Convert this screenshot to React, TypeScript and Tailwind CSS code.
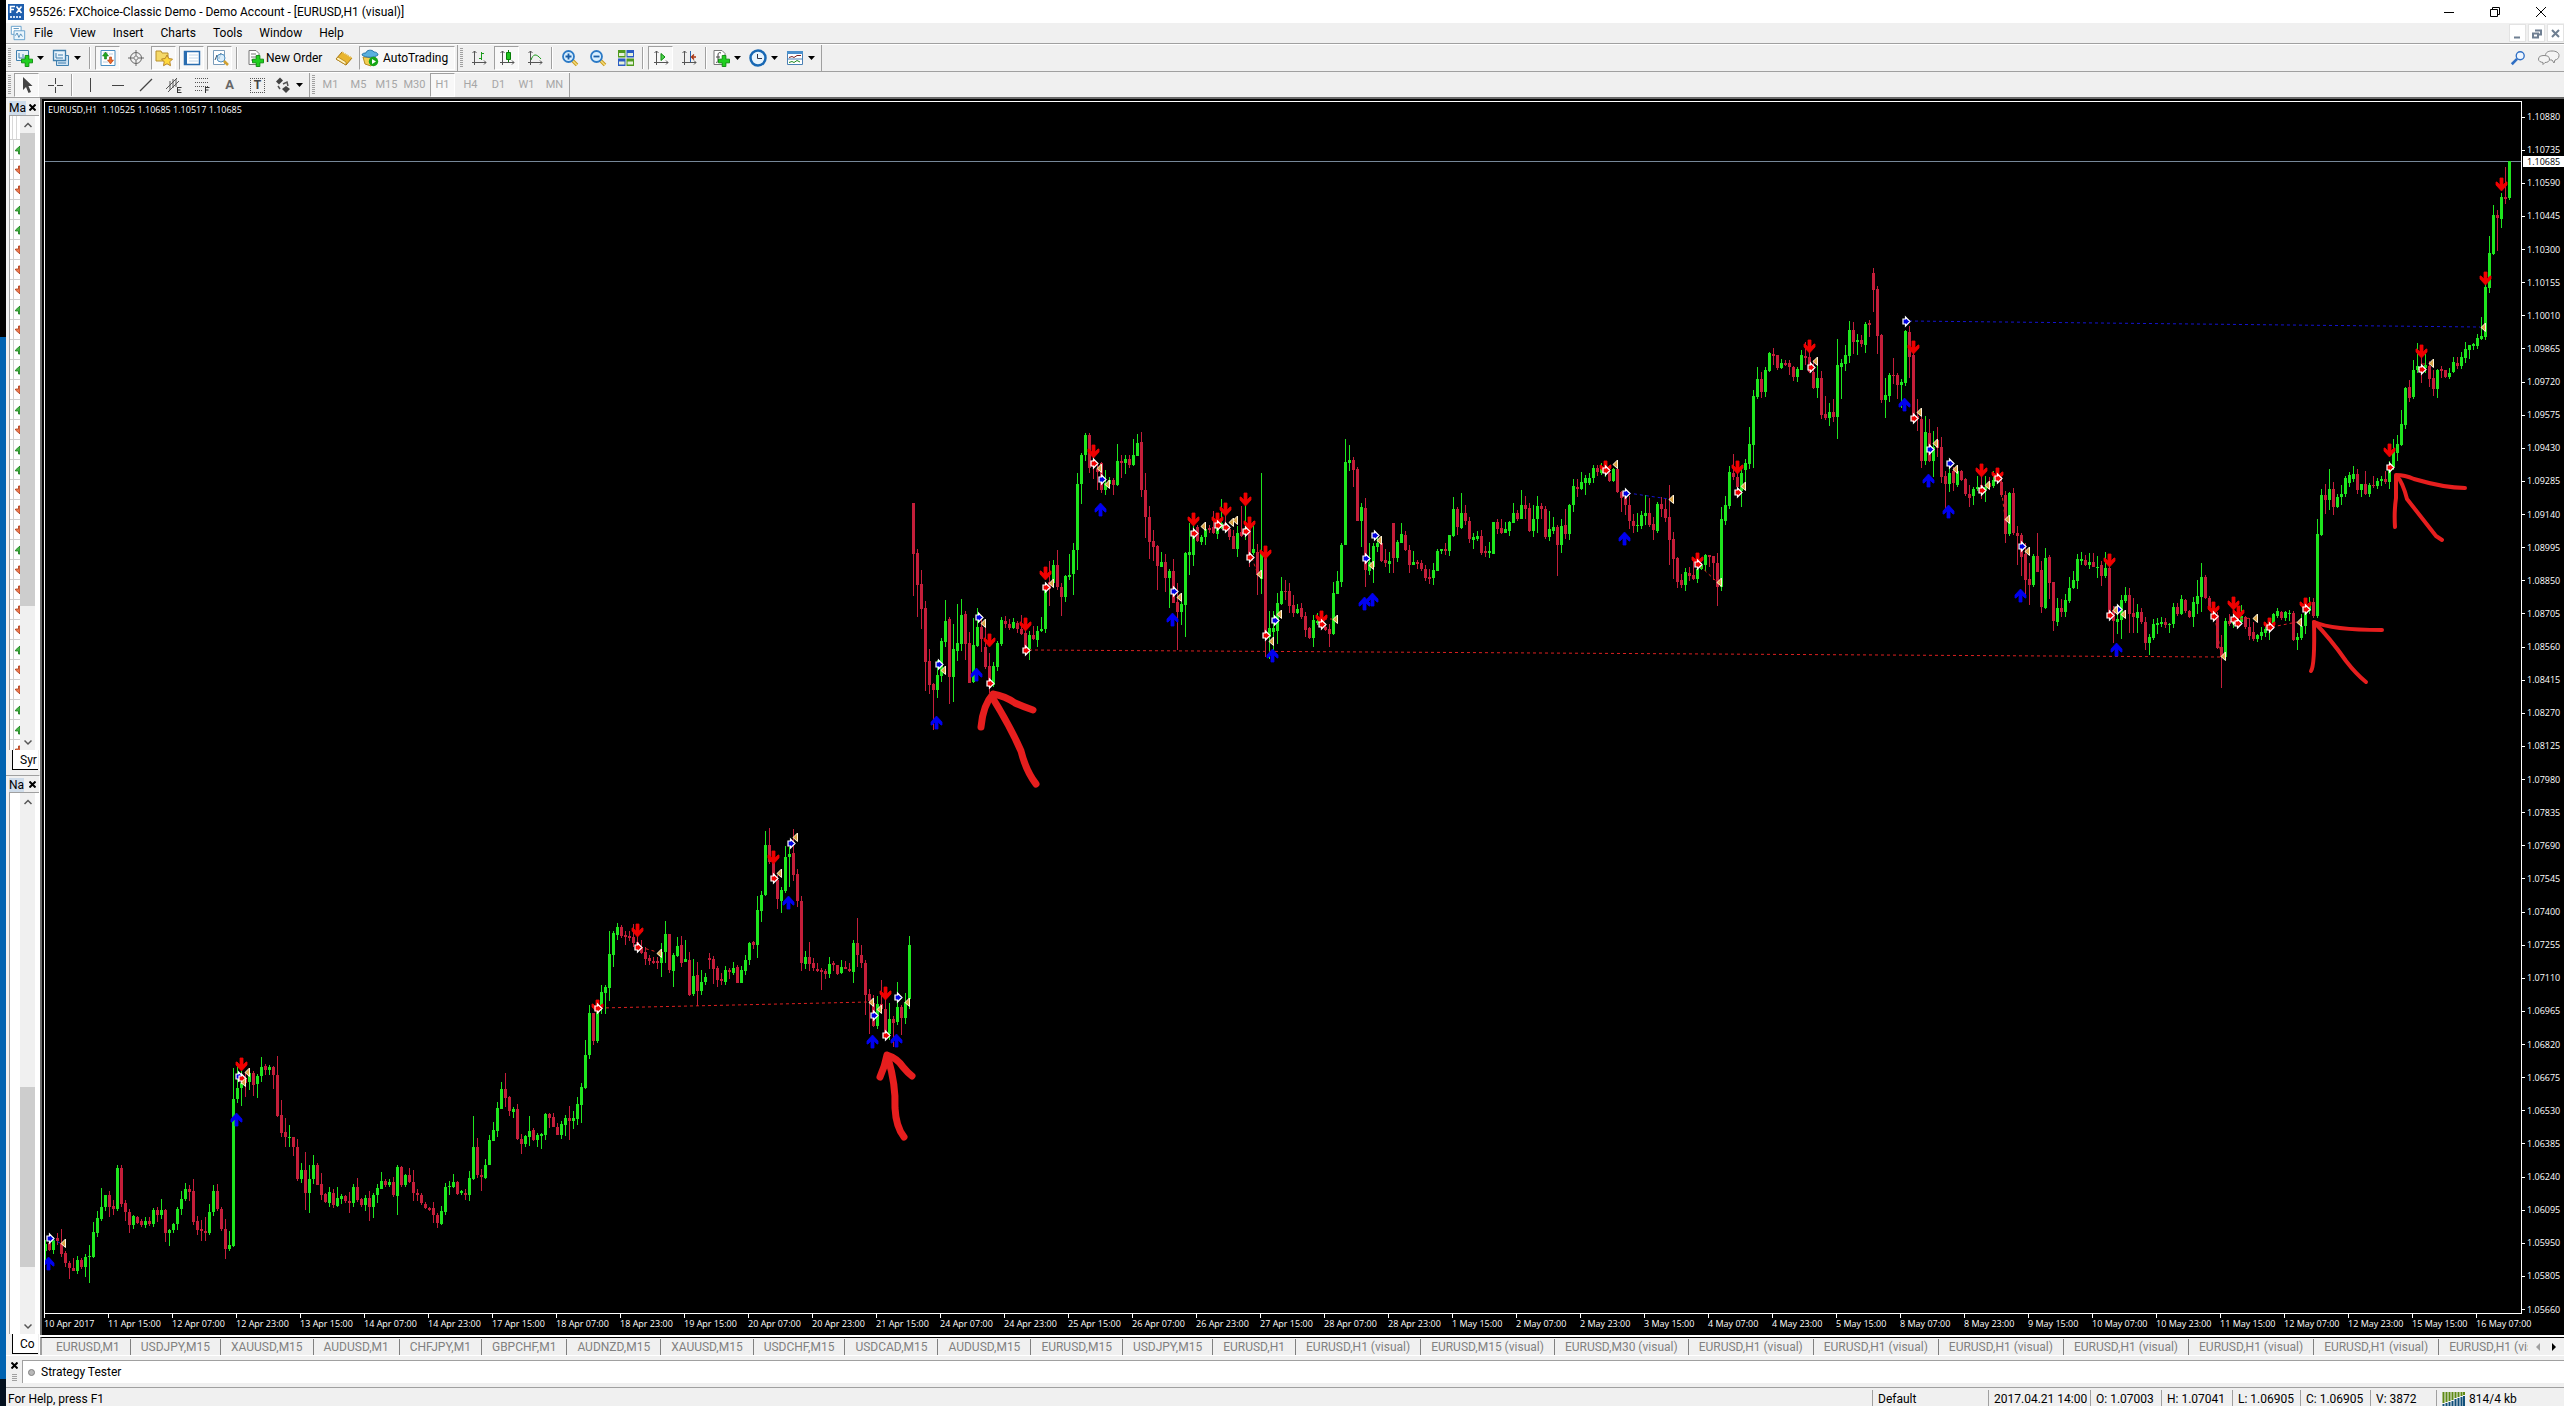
import type { ReactNode } from "react"
import clsx from "clsx"

type Segment = { first: number; base: number; unit: number; bars: string }

// Each bar: direction, then high, body top, body bottom, low measured down from the segment base
const segments: Segment[] = [
  {
    first: 0,
    base: 900,
    unit: 3,
    bars: `g1020,1032,1052,1090 r1022,1030,1050,1052 g1012,1020,1050,1062 r998,1015,1022,1035 r986,1030,1062,1072 r1052,1060,1090,1102
r1082,1088,1104,1136 r1075,1104,1112,1114 g1068,1080,1112,1122 r1075,1080,1100,1106 g1062,1070,1100,1130 g1035,1068,1072,1150
g966,996,1072,1074 g934,954,998,1012 g864,922,958,964 g884,885,922,934 r874,885,920,950 r900,918,926,944 g795,803,926,932
r795,803,912,920 r900,910,936,962 r926,936,976,1000 g944,948,976,986 r948,950,968,972 r956,964,974,980 g950,962,976,984
r950,963,972,978 g924,930,972,980 r920,930,946,966 g898,930,946,956 r928,930,1000,1026 g986,990,1000,1038 g968,972,990,998
g920,926,972,990 g874,898,928,946 g850,866,898,904 r856,866,876,904 r836,874,966,974 r948,964,990,1004 r960,988,994,1022
r950,992,1000,1022 g912,936,1000,1004 g855,874,936,948 r852,874,926,932 r922,926,988,992 r958,988,1048,1078 g992,1034,1048,1054
g505,598,1038,1040 g486,564,598,608 g512,550,564,618 r520,535,550,590 g512,519,546,570 r514,519,554,588 g522,528,552,594
g472,501,528,545 r492,499,510,526 g495,500,510,526 r498,502,526,566 r468,524,648,652 r600,645,700,712 r654,696,712,740
g674,710,714,740 r710,712,742,768 r718,742,836,844 g788,810,836,848 r756,810,878,930 g796,836,878,940 g766,796,836,852
r790,796,854,856 r818,852,884,900 r878,882,905,908 g862,876,910,922 r868,878,916,924 g862,894,918,922 g882,887,897,912
r886,888,902,908 r876,902,908,938 g852,862,908,920 r834,862,900,906 r894,898,914,922 g884,894,914,932 r874,894,920,964
g880,884,920,954 g852,864,884,908 g816,844,866,868 r838,844,854,862 g836,846,854,860 r830,846,886,892 g796,800,888,944
r798,802,856,862 g822,826,856,860 r804,826,846,850 r810,846,880,902 r868,880,884,904 r880,884,910,914 r906,912,924,928
r920,924,930,934 r905,924,944,968 r938,944,970,984 g918,934,972,974 g850,862,936,944 g844,858,862,886 g822,846,862,864
r844,846,882,886 g870,874,880,886 r868,880,884,900 g814,834,884,902 g648,742,836,840 r714,742,826,834 r806,826,832,874
g778,794,834,836 g704,720,794,796 g666,690,722,724 g606,624,692,710 g546,568,626,628 r518,568,594,622 r588,590,632,648
g620,628,636,654 r612,628,716,720 r702,716,732,762 g704,708,732,740 g648,692,712,738 r684,690,720,724 g698,706,720,740
g700,702,708,746 g640,642,706,720 r638,642,654,684 r640,652,680,682 r668,680,704,706`,
  },
  {
    first: 129,
    base: 800,
    unit: 3,
    bars: `g962,972,1005,1018 g945,954,974,1008 r918,955,964,1020 g932,954,962,988 g892,912,958,974 g848,860,914,970 g720,765,864,866
g615,640,766,776 r638,640,722,735 g625,628,722,730 g556,576,628,642 g556,562,578,642 g393,462,564,602 g393,398,466,500
g370,380,404,420 r374,380,408,415 r392,404,412,434 r392,408,414,422 r372,410,428,440 r400,426,436,444 r420,440,458,462
r442,456,478,494 r464,474,484,494 r472,482,488,492 r472,482,490,506 g430,456,490,530 g363,402,456,488 r402,402,510,518
g460,465,514,560 g412,438,468,472 r408,436,488,500 g420,478,486,486 r456,480,584,588 g476,528,582,588 r486,526,572,618
g510,545,572,586 g518,530,546,556 r460,474,480,506 r468,476,506,552 r498,504,540,560 r520,538,544,554 g498,510,546,556
r504,510,516,536 g486,504,520,526 r494,502,548,550 g498,510,548,550 g466,480,512,524 g426,428,480,494 r422,426,434,446
g288,330,436,474 g274,286,332,366 g94,136,286,288 r84,136,186,192 r178,188,230,240 r226,240,296,328 g260,270,302,338
g138,172,272,280 g140,162,172,260 r86,160,226,242 r206,222,304,322 r288,304,490,512 g454,472,492,506 r426,472,492,512
r474,490,504,512 r488,508,514,516 r504,510,516,570 r508,514,522,536 g472,492,522,534 r484,490,496,512 r494,496,522,526
g480,502,518,522 r484,500,506,508 r490,506,514,516 g420,430,516,548 r354,430,466,500 r436,466,490,504 r480,488,584,644
r568,582,602,702 r584,610,678,680 g588,612,678,688 r540,612,628,632 r570,628,700,702 g608,658,702,720 r648,658,668,742
g546,620,666,674 r616,620,654,706 g578,606,654,672 g408,436,598,626`,
  },
  {
    first: 217,
    base: 400,
    unit: 3,
    bars: `r309,310,462,588 r446,460,556,650 r510,552,628,686 r603,625,785,874 r748,784,854,882 r848,852,870,990 g780,826,870,894
g714,724,828,846 g600,664,726,740 r652,658,830,912 g672,748,830,906 g612,730,752,782 g596,645,732,752 r634,642,732,780
r696,730,848,850 g654,736,846,848 g624,682,738,740 r652,680,716,756 r668,740,800,808 r760,798,860,878 g786,798,856,860
g722,730,800,814 g650,660,732,738 r648,662,672,684 r656,672,684,690 g654,666,684,688 r664,668,686,698 r644,686,702,706
r686,698,746,750 g692,706,748,780 r678,704,718,720 g678,692,720,740 g650,688,694,696 g562,570,688,700 r484,545,566,618
g480,494,548,556 r450,494,560,570 r548,560,590,648 g524,528,592,606 g462,524,530,540 g430,450,522,584 g220,252,450,510
g158,164,252,312 g98,104,166,184 r98,104,204,218 r170,180,202,236 r190,206,216,270 r186,188,270,278 g210,250,270,285
g232,240,252,262 r234,240,256,284 g132,184,254,258 r166,182,188,234 g166,176,190,222 r166,178,194,204 g118,166,196,198
g102,128,168,168 r96,126,270,292 r220,270,352,414 r318,350,426,478 r390,424,440,484 r436,438,498,570 g456,486,500,502
r462,486,534,576 g506,514,534,624 r476,512,608,608 r550,606,636,750 g606,612,636,674 g456,460,614,712 g368,456,464,524
g376,398,464,498 r376,380,424,426 g404,410,426,434 g382,386,412,434 r376,384,390,398 r334,380,400,402 g350,380,402,416
g298,370,384,386 r334,368,376,384 r380,386,410,420 r390,408,446,448 g378,398,446,472 r318,396,408,410 g312,384,406,420
r380,386,480,500 g364,448,460,466 r432,456,524,584 g220,460,536,582 r472,474,704,770 g632,684,712,776 g634,684,696,750
g580,610,694,732 g530,572,612,616 r540,572,574,600 r550,572,618,640 r586,616,638,650 g612,626,638,642 r610,624,650,656
r636,648,690,712 r680,684,714,716 g644,660,714,740 g640,664,670,676 r646,650,676,682 r672,680,690,692 r672,688,702,740
g545,580,702,704 g514,544,582,582 g430,434,546,560 g118,186,436,436 g134,180,188,212 r170,180,210,262 r202,206,362,364
g308,322,362,440 r294,324,510,560 g430,486,512,524 g430,438,500,548 g412,430,440,456 r420,430,482,486 r448,480,490,500
g456,484,492,520 r368,370,474,518 g420,426,474,486 g368,402,428,430 r392,404,450,454 r436,450,494,518 g454,486,494,496
r480,486,492,506 r480,488,508,512 r496,506,534,542 r506,532,538,552 g490,510,534,554 g448,454,512,514 g446,448,454,462
r430,448,454,466 g404,406,452,468 g292,326,408,410 r320,326,382,404 g280,338,384,386 r316,338,362,376 r350,362,416,428
g400,410,420,446 g392,408,416,424`,
  },
  {
    first: 359,
    base: 250,
    unit: 3,
    bars: `r840,858,908,914 r888,904,910,920 g876,904,908,924 g816,816,912,912 r808,816,838,852 r806,834,848,852 g816,838,850,850
g812,816,842,858 g760,788,818,820 r780,788,808,812 g720,766,806,808 r738,766,776,806 r758,774,842,846 g766,806,842,862
g738,768,806,850 r760,768,778,808 r768,776,860,866 g782,838,860,874 g802,832,842,852 r824,832,884,978 g808,828,884,910
r778,826,852,866 g762,766,852,870 g688,708,766,786 r688,710,718,742 g666,696,718,720 g674,684,698,734 g670,684,700,704
g646,654,684,698 r644,654,666,678 g640,658,668,676 g650,658,670,680 r660,668,694,696 g654,658,694,696 r650,656,726,728
r722,726,744,786 r730,742,766,796 r738,764,814,838 r792,812,828,850 g788,824,828,846 g782,796,828,836 g736,788,798,824
r744,790,824,830 r802,822,840,870 g756,762,844,848 r740,762,778,802 r744,776,804,816 r706,800,870,944 r846,866,926,988
r922,924,996,1014 r972,990,1006,1014 g954,966,1006,1022 r950,968,978,992 r932,976,988,990 g940,956,988,998 g940,944,956,960
g912,916,946,962 r914,916,922,950 r918,918,938,990 r908,938,1012,1068 g770,808,1012,1022 g738,766,814,824 g648,666,768,776
r612,668,682,690 r650,680,710,712 g650,668,722,770 g628,640,660,720 g530,582,642,656 g420,438,584,654 g350,386,440,446
r366,388,426,444 g350,360,426,440 g306,308,362,366 r294,312,318,346 r314,316,354,360 g328,338,354,358 r330,338,344,348
r330,338,350,376 r348,350,380,392 g350,358,380,396 g300,314,360,360 r276,318,324,346 r300,320,366,370 r330,366,414,416
g338,384,414,444 r364,384,494,506 r438,492,504,510 g460,486,504,528 r448,486,500,516 g266,346,500,566 g326,338,352,446
g286,314,342,364 g212,240,318,340 r216,240,276,312 g252,270,276,316 r256,270,282,292 g216,222,284,310 r210,220,226,262
r54,68,120,186 r108,118,258,312 r252,256,450,460 g384,436,450,504 g368,374,438,456 r324,374,378,402 r370,376,404,446
g388,396,404,474 g240,242,398,408 r228,246,320,384 r306,314,516,520 r446,498,508,542 r500,506,632,654 g498,546,632,644
r506,548,632,636 g542,592,632,682 r530,570,594,620 r560,592,680,698 r662,678,702,776 g642,670,702,726 r650,664,700,724
g658,664,704,710 r660,664,690,694 r684,686,732,738 r704,732,744,770 g710,716,738,766 g678,710,718,722 r674,706,716,746
g678,710,720,756 r680,698,710,716 g664,690,708,714 r672,680,692,702 r682,696,736,740 r724,734,852,878 g726,730,852,858
r714,730,850,854 r828,850,858,946 r850,856,920,978 r880,912,990,1040 r940,988,1006,1064 g912,918,1006,1012 r848,918,966,966
r932,960,1070,1090 g894,924,1074,1078 r914,920,998,1048 r996,996,1112,1144 g1044,1074,1116,1128 r1046,1074,1086,1100
g1032,1050,1086,1100 g982,1014,1052,1058 g962,990,1014,1016 g912,928,994,1016 g906,926,934,944 r916,930,944,948
g908,936,944,958 r910,936,950,952 g918,950,954,984`,
  },
  {
    first: 514,
    base: 120,
    unit: 2.613,
    bars: `r1152,1164,1192,1218 g1130,1170,1192,1196 r1160,1170,1288,1300 r1270,1280,1310,1366 g1286,1304,1312,1342 g1242,1254,1306,1356
g1220,1240,1256,1262 r1222,1240,1290,1340 r1250,1288,1298,1340 g1264,1286,1300,1340 r1276,1286,1312,1316 r1298,1312,1366,1386
g1342,1350,1366,1398 g1304,1318,1354,1358 g1300,1314,1320,1342 g1298,1312,1318,1324 r1300,1312,1320,1328 g1314,1316,1320,1340
g1262,1272,1318,1328 r1262,1272,1292,1296 g1240,1252,1292,1294 r1252,1254,1284,1288 r1280,1284,1298,1300 g1246,1260,1298,1326
g1202,1244,1264,1290 g1158,1194,1246,1286 r1188,1194,1248,1252 r1244,1248,1280,1284 r1270,1280,1296,1300 r1286,1294,1380,1382
r1345,1376,1402,1484 g1300,1308,1404,1406 r1290,1308,1318,1322 g1280,1300,1318,1328 r1290,1300,1312,1318 g1268,1296,1312,1314
r1296,1298,1326,1330 r1300,1324,1348,1360 r1312,1338,1356,1362 g1342,1346,1356,1364 g1324,1338,1348,1360 g1320,1330,1340,1350
g1310,1316,1332,1358 g1288,1292,1314,1320 g1274,1284,1296,1300 r1282,1286,1302,1306 g1284,1286,1302,1308 g1280,1288,1292,1310
r1284,1288,1358,1362 g1340,1352,1358,1386 g1290,1322,1354,1358 g1280,1288,1322,1342 g1246,1262,1284,1290 r1248,1260,1296,1300
g1042,1082,1296,1300 g964,980,1084,1086 r952,980,992,1030 g912,964,992,1018 r946,964,1010,1032 g978,984,1010,1014
g954,976,984,1006 g930,936,976,984 g920,928,948,960 g904,926,938,946 r912,926,966,978 g950,952,966,984 r918,952,976,980
g948,954,976,986 r930,954,956,962 g936,942,956,964 g930,938,944,956 r918,938,946,950 g890,908,946,964 g834,866,906,914
g822,846,870,892 g758,794,850,852 g698,700,796,808 r680,698,726,736 g626,652,724,728 g584,644,654,662 r610,644,660,686
g612,640,648,662 r630,642,676,698 r652,674,704,722 g650,652,704,726 r642,650,656,674 r652,654,672,674 g648,660,672,676
g618,632,658,662 r620,634,642,650 g606,618,644,650 g580,598,622,636 g588,588,602,624 g584,586,590,602 g558,570,590,598
g516,564,572,574 g420,436,566,574 g302,348,438,452 g222,248,350,354 r236,248,256,342 g190,200,258,282 r124,200,206,220
g108,108,204,208`,
  },
]

const candles = segments.flatMap(({ first, base, unit, bars }) =>
  bars.split(/\s+/).map((bar, i) => {
    const [high, top, bottom, low] = bar
      .slice(1)
      .split(",")
      .map((v) => Math.round(base + Number(v) / unit))
    return { x: 45 + 4 * (first + i), up: bar[0] === "g", high, top, bottom, low }
  }),
)

type Point = [number, number]

const sellSignals: Point[] = [
  [241, 1058], [597, 1000], [637, 924], [773, 851], [885, 987], [989, 634], [1025, 618], [1045, 567], [1093, 445],
  [1193, 513], [1217, 513], [1225, 503], [1245, 493], [1249, 517], [1265, 546], [1321, 611], [1605, 461], [1697, 553],
  [1737, 461], [1809, 340], [1913, 341], [1981, 464], [1997, 468], [2109, 554], [2213, 602], [2233, 597], [2238, 606],
  [2269, 618], [2305, 598], [2389, 444], [2421, 345], [2485, 272], [2501, 178],
]

const buySignals: Point[] = [
  [48, 1257], [236, 1113], [788, 896], [872, 1035], [896, 1034], [936, 716], [976, 668], [1100, 503], [1172, 613],
  [1272, 649], [1364, 597], [1372, 593], [1624, 532], [1904, 398], [1928, 474], [1948, 505], [2020, 589], [2116, 643],
]

const buyEntries: Point[] = [
  [50, 1238], [239, 1076], [791, 843], [874, 1015], [898, 997], [939, 664], [979, 617], [1102, 479], [1174, 591],
  [1275, 620], [1366, 558], [1375, 535], [1626, 493], [1906, 321], [1930, 449], [1950, 463], [2022, 546], [2118, 609],
]

const sellEntries: Point[] = [
  [242, 1078], [598, 1008], [638, 947], [774, 878], [886, 1035], [990, 683], [1026, 650], [1046, 587], [1094, 463],
  [1194, 533], [1218, 525], [1226, 527], [1246, 531], [1250, 557], [1266, 635], [1322, 624], [1606, 470], [1698, 564],
  [1738, 492], [1811, 367], [1914, 418], [1982, 490], [1998, 478], [2110, 615], [2214, 616], [2234, 619], [2238, 623],
  [2270, 627], [2306, 609], [2390, 467], [2422, 369],
]

const exits: Point[] = [
  [63, 1243], [247, 1072], [243, 1082], [659, 953], [779, 873], [795, 837], [871, 1002], [879, 1009], [907, 1002],
  [943, 670], [983, 623], [1051, 583], [1099, 468], [1107, 484], [1179, 597], [1203, 526], [1231, 522], [1235, 520],
  [1259, 574], [1271, 641], [1279, 614], [1335, 619], [1371, 565], [1379, 540], [1615, 464], [1671, 499], [1719, 582],
  [1743, 486], [1815, 361], [1919, 412], [1935, 443], [1955, 469], [1987, 485], [2007, 519], [2027, 551], [2115, 610],
  [2123, 614], [2223, 656], [2255, 618], [2299, 622], [2431, 363], [2483, 327],
]

const sellTrades = [
  "M600 1008L869 1002", "M1029 650L2221 657", "M640 947L657 952", "M2272 627L2297 622", "M2240 619L2252 618",
  "M1700 566L1716 581", "M2000 480L2005 517", "M2215 617L2221 655", "M1324 619L1332 619", "M2422 364L2428 364",
  "M1252 558L1257 572",
]

const buyTrades = ["M1909 321L2480 327", "M1628 493L1669 499", "M52 1239L60 1243"]

const prices = Array.from({ length: 37 }, (_, i) => (1.1088 - i * 0.00145).toFixed(5))

const times = [
  "10 Apr 2017", "11 Apr 15:00", "12 Apr 07:00", "12 Apr 23:00", "13 Apr 15:00", "14 Apr 07:00", "14 Apr 23:00",
  "17 Apr 15:00", "18 Apr 07:00", "18 Apr 23:00", "19 Apr 15:00", "20 Apr 07:00", "20 Apr 23:00", "21 Apr 15:00",
  "24 Apr 07:00", "24 Apr 23:00", "25 Apr 15:00", "26 Apr 07:00", "26 Apr 23:00", "27 Apr 15:00", "28 Apr 07:00",
  "28 Apr 23:00", "1 May 15:00", "2 May 07:00", "2 May 23:00", "3 May 15:00", "4 May 07:00", "4 May 23:00",
  "5 May 15:00", "8 May 07:00", "8 May 23:00", "9 May 15:00", "10 May 07:00", "10 May 23:00", "11 May 15:00",
  "12 May 07:00", "12 May 23:00", "15 May 15:00", "16 May 07:00",
]

const chartTabs = [
  "EURUSD,M1", "USDJPY,M15", "XAUUSD,M15", "AUDUSD,M1", "CHFJPY,M1", "GBPCHF,M1", "AUDNZD,M15", "XAUUSD,M15",
  "USDCHF,M15", "USDCAD,M15", "AUDUSD,M15", "EURUSD,M15", "USDJPY,M15", "EURUSD,H1", "EURUSD,H1 (visual)",
  "EURUSD,M15 (visual)", "EURUSD,M30 (visual)", "EURUSD,H1 (visual)", "EURUSD,H1 (visual)", "EURUSD,H1 (visual)",
  "EURUSD,H1 (visual)", "EURUSD,H1 (visual)", "EURUSD,H1 (visual)", "EURUSD,H1 (visual)",
]

const timeframes = ["M1", "M5", "M15", "M30", "H1", "H4", "D1", "W1", "MN"]
const menus = ["File", "View", "Insert", "Charts", "Tools", "Window", "Help"]
const ticks = "GRRGGRRRGRGGRGRGGRRRGRRRRGRRGGR".split("")

function Icon({ size = "size-[18px]", children }: { size?: string; children: ReactNode }) {
  return (
    <svg viewBox="0 0 18 18" className={clsx("shrink-0", size)} fill="none" aria-hidden="true">
      {children}
    </svg>
  )
}

const Plus = () => (
  <path d="M10 6.500h4v4h4v4h-4v4h-4v-4h-4v-4h4z" fill="#1fd01f" stroke="#0b8a0b" strokeWidth="1" transform="translate(1 0.500) scale(.92)" />
)

const Magnifier = ({ minus }: { minus?: boolean }) => (
  <Icon>
    <path d="M11 11l5 5" stroke="#c89a1e" strokeWidth="3.500" />
    <path d="M11 11l5 5" stroke="#f5dd7a" strokeWidth="1.500" />
    <circle cx="7.500" cy="7.500" r="5.500" fill="#d8efff" stroke="#2c7ac6" strokeWidth="1.800" />
    <path d={minus ? "M4.500 7.500h6" : "M4.500 7.500h6M7.500 4.500v6"} stroke="#1b5ea6" strokeWidth="1.800" />
  </Icon>
)

const Axes = ({ children }: { children: ReactNode }) => (
  <Icon>
    <path d="M4.500 2v14M2 13.500h14M2.500 4l2-2 2 2M14 11.500l2 2-2 2" stroke="#555" />
    {children}
  </Icon>
)

function Caret() {
  return (
    <svg viewBox="0 0 7 4" className="h-1 w-[7px] shrink-0" aria-hidden="true">
      <path d="M0 0h7L3.500 4z" fill="#000" />
    </svg>
  )
}

function Tool({ label, pressed, menu, children }: { label: string; pressed?: boolean; menu?: boolean; children: ReactNode }) {
  return (
    <button
      type="button"
      aria-label={label}
      aria-pressed={pressed}
      className={clsx(
        "flex h-6 shrink-0 items-center border",
        menu ? "w-[34px] gap-1" : "w-[25px] justify-center",
        pressed ? "border-t-[#a0a0a0] border-l-[#a0a0a0] border-r-white border-b-white bg-[#f8f8f8]" : "border-transparent",
      )}
    >
      {children}
      {menu && <Caret />}
    </button>
  )
}

const Divider = () => <span className="mx-px h-[22px] w-[2px] shrink-0 border-l border-[#a0a0a0] bg-white" />

const Grip = () => <span className="h-5 w-[3px] shrink-0 bg-[repeating-linear-gradient(#a0a0a0_0_1px,#f0f0f0_1px_2px)]" />

function Band({ children }: { children: ReactNode }) {
  return <div className="flex items-center gap-[3px] border-r border-[#a0a0a0] px-[2px]">{children}</div>
}

function Toolbars() {
  return (
    <div className="bg-[#f0f0f0]">
      <div className="flex h-7 border-t border-[#a0a0a0]">
        <div className="flex border-t border-white">
          <Band>
            <Grip />
            <Tool label="New chart" menu>
              <Icon>
                <path d="M1.500 1.500h12v10h-12z" fill="#e8f3fb" stroke="#3f7fae" />
                <path d="M4 4v5h7M8 5v3" stroke="#3f7fae" />
                <Plus />
              </Icon>
            </Tool>
            <Tool label="Profiles" menu>
              <Icon>
                <path d="M4.500 6.500h12v10h-12z" fill="#cfe3f3" stroke="#3f7fae" />
                <path d="M1.500 1.500h12v10h-12z" fill="#e8f3fb" stroke="#3f7fae" strokeWidth="1.300" />
                <path d="M4 4v5h7M6 14h8M6 6h5" stroke="#3f7fae" />
              </Icon>
            </Tool>
            <Divider />
            <Tool label="Market Watch" pressed>
              <Icon>
                <path d="M2 1.500h14v15H2z" fill="#fff" stroke="#4a90c4" />
                <path d="M4 4h5M4 13h5M10 5h4M10 12h4" stroke="#bcd" />
                <path d="M3.500 7l3-4 3 4h-2v3h-2V7z" fill="#22a822" stroke="#137a13" strokeWidth=".600" />
                <path d="M8.500 11l3 4 3-4h-2V8h-2v3z" fill="#f26a2a" stroke="#a83a10" strokeWidth=".600" />
              </Icon>
            </Tool>
            <Tool label="Data Window">
              <Icon>
                <circle cx="9" cy="9" r="5.500" stroke="#666" />
                <path d="M9 1v6M9 11v6M1 9h6M11 9h6" stroke="#666" />
                <circle cx="9" cy="9" r="2" stroke="#888" />
              </Icon>
            </Tool>
            <Tool label="Navigator" pressed>
              <Icon>
                <path d="M1 2h5l1 2h6v8H1z" fill="#f5d968" stroke="#b8902a" />
                <path d="M12 6l1.800 3.600 3.700.5-2.700 2.700.7 3.900-3.500-1.900-3.500 1.900.7-3.900L6.500 10l3.700-.5z" fill="#ffd83d" stroke="#b8862a" />
              </Icon>
            </Tool>
            <Tool label="Terminal" pressed>
              <Icon>
                <path d="M1.500 2.500h15v13h-15z" fill="#fff" stroke="#2a6db0" strokeWidth="1.500" />
                <path d="M3 3v12" stroke="#2a6db0" strokeWidth="2" />
                <path d="M6 6h9M6 9h9M6 12h9" stroke="#c4d8ea" />
              </Icon>
            </Tool>
            <Tool label="Strategy Tester" pressed>
              <Icon>
                <path d="M2.500 1.500h11v14h-11z" fill="#fff" stroke="#7a9cba" />
                <path d="M4 11l2-5 2 4 2-6" stroke="#456" />
                <circle cx="10" cy="9" r="4" fill="#cfe8fa" fillOpacity=".8" stroke="#4f8fc0" />
                <path d="M13 12l4 4" stroke="#d0a030" strokeWidth="2.500" />
              </Icon>
            </Tool>
            <Divider />
            <button type="button" className="flex h-6 w-[86px] shrink-0 items-center gap-[2px] pl-1 whitespace-nowrap">
              <Icon>
                <path d="M3 1.500h7l3 3v11H3z" fill="#fff" stroke="#777" />
                <path d="M5 5h5M5 8h6M5 11h4" stroke="#777" />
                <Plus />
              </Icon>
              New Order
            </button>
            <Tool label="MetaEditor">
              <Icon>
                <path d="M1 10l6-7 10 6-6 7z" fill="#e9b52f" stroke="#a8760f" />
                <path d="M1 10l10 6v-3L3 8z" fill="#fff1b8" stroke="#a8760f" strokeWidth=".700" />
                <path d="M7 3l10 6" stroke="#fbe08a" />
              </Icon>
            </Tool>
            <button
              type="button"
              aria-pressed="true"
              className="flex h-6 w-24 shrink-0 items-center gap-1 border border-t-[#a0a0a0] border-r-white border-b-white border-l-[#a0a0a0] bg-[#f8f8f8] pl-px whitespace-nowrap"
            >
              <Icon>
                <path d="M2 8l2 7 6 2 5-8z" fill="#f2cf52" stroke="#b48a22" />
                <path d="M1 6c0-2 3-2 4-2 0-3 6-4 8-1 2 0 4 1 4 3-4 3-12 3-16 0z" fill="#5ab0de" stroke="#2a78aa" />
                <circle cx="12.500" cy="12.500" r="4.700" fill="#16a616" />
                <path d="M11 10l4 2.500-4 2.500z" fill="#fff" />
              </Icon>
              AutoTrading
            </button>
          </Band>
          <Band>
            <Grip />
            <Tool label="Bar chart">
              <Axes>
                <path d="M11.500 3v8M9 9.500h2M12 4.500h2" stroke="#1a9a1a" />
              </Axes>
            </Tool>
            <Tool label="Candlesticks" pressed>
              <Axes>
                <path d="M10.500 1v12" stroke="#067d06" />
                <path d="M8.500 3.500h4v7h-4z" fill="#1fc41f" stroke="#067d06" />
              </Axes>
            </Tool>
            <Tool label="Line chart">
              <Axes>
                <path d="M5 11c2-6 5-7 10-1" stroke="#1a9a1a" />
              </Axes>
            </Tool>
            <Divider />
            <Tool label="Zoom in">
              <Magnifier />
            </Tool>
            <Tool label="Zoom out">
              <Magnifier minus />
            </Tool>
            <Tool label="Tile windows">
              <Icon>
                <path d="M1 1h7.500v7.500H1zM9.500 9.500H17V17H9.500z" fill="#4f9a1f" />
                <path d="M9.500 1H17v7.500H9.500zM1 9.500h7.500V17H1z" fill="#2a5cc4" />
                <path d="M2 4h5.500v3H2zM10.500 4H16v3h-5.500zM2 12.500h5.500v3H2zM10.500 12.500H16v3h-5.500z" fill="#e6f1dc" />
              </Icon>
            </Tool>
            <Divider />
            <Tool label="Auto scroll" pressed>
              <Axes>
                <path d="M9 4.500l4 3.500-4 3.500z" fill="#4fd44f" stroke="#0a8a0a" />
              </Axes>
            </Tool>
            <Tool label="Chart shift">
              <Axes>
                <path d="M10.500 2v11" stroke="#2a62b0" />
                <path d="M16 8h-4M14 5.500L11.500 8l2.500 2.500" stroke="#a8330f" strokeWidth="1.300" />
              </Axes>
            </Tool>
            <Divider />
            <Tool label="Indicators" menu>
              <Icon>
                <path d="M2 1.500h8l3 3v11H2z" fill="#fff" stroke="#777" />
                <path d="M9 4c-2-1-3 0-3 2v6c0 1-1 2-2 1M4 8h4" stroke="#444" />
                <Plus />
              </Icon>
            </Tool>
            <Tool label="Periodicity" menu>
              <Icon>
                <circle cx="9" cy="9" r="7.500" fill="#e8f4fd" stroke="#1868b4" strokeWidth="2.500" />
                <path d="M8.500 5v4.500H13" stroke="#334" />
              </Icon>
            </Tool>
            <Tool label="Templates" menu>
              <Icon>
                <path d="M1.500 2.500h15v13h-15z" fill="#fff" stroke="#4a80b4" />
                <path d="M1 2h16v3H1z" fill="#4a90cc" />
                <path d="M3 8.500l3-1 2 1 3-2h4" stroke="#7a2020" />
                <path d="M1.500 10h15" stroke="#4a80b4" />
                <path d="M3 13.500l3-1 2 1 3-2 3 1.500" stroke="#208a20" />
              </Icon>
            </Tool>
          </Band>
        </div>
        <div className="flex flex-1 items-center justify-end gap-3 border-t border-white pr-1">
          <button type="button" aria-label="Search">
            <Icon size="size-4">
              <path d="M8 10l-6 6" stroke="#2f6fc4" strokeWidth="3" />
              <circle cx="11.500" cy="6.500" r="4.500" fill="#eef6ff" stroke="#2f6fc4" strokeWidth="1.500" />
            </Icon>
          </button>
          <button type="button" aria-label="Chat">
            <svg viewBox="0 0 22 16" className="h-4 w-[22px]" fill="#f4f4f4" stroke="#888" aria-hidden="true">
              <path d="M14 1c4 0 7 1.500 7 4.500S19 9.500 17 10l-1 3-2-3c-4 0-6.500-1.500-6.500-4.500S10 1 14 1z" />
              <path d="M6 5.500c3 0 5.500 1 5.500 3.500s-2 3.500-4.500 3.500l-2 2v-2C2.500 12 .5 11.500.5 9S3 5.500 6 5.500z" />
            </svg>
          </button>
        </div>
      </div>
      <div className="flex h-[26px] border-t border-[#a0a0a0]">
        <div className="flex border-t border-white">
          <Band>
            <Grip />
            <Tool label="Cursor" pressed>
              <Icon>
                <path d="M5 1v13l3-3 2.500 6 2.500-1-2.500-6h4z" fill="#444" />
              </Icon>
            </Tool>
            <Tool label="Crosshair">
              <Icon>
                <path d="M9.500 2v6M9.500 11v6M2 9.500h6M11 9.500h6" stroke="#444" />
              </Icon>
            </Tool>
            <Divider />
            <Tool label="Vertical line">
              <Icon>
                <path d="M9.500 2v14" stroke="#444" />
              </Icon>
            </Tool>
            <Tool label="Horizontal line">
              <Icon>
                <path d="M3 9.500h12" stroke="#444" />
              </Icon>
            </Tool>
            <Tool label="Trendline">
              <Icon>
                <path d="M3 15L15 3" stroke="#444" strokeWidth="1.300" />
              </Icon>
            </Tool>
            <Tool label="Equidistant channel">
              <Icon>
                <path d="M1 13L12 2M3 16L14 5M5 5v9M8 3v9M11 3v8" stroke="#555" />
                <path d="M12.500 11v6M12.500 11.500h4M12.500 14h3M12.500 16.500h4" stroke="#333" />
              </Icon>
            </Tool>
            <Tool label="Fibonacci retracement">
              <Icon>
                <path d="M2 2.500h14M2 6.500h14M2 10.500h14M2 14.500h8" stroke="#555" strokeDasharray="1 1" />
                <path d="M12.500 11v6M12.500 11.500h4M12.500 14h3" stroke="#333" />
              </Icon>
            </Tool>
            <Tool label="Text">
              <span className="text-[13px] font-bold text-[#666]">A</span>
            </Tool>
            <Tool label="Text label">
              <span className="flex size-[15px] items-center justify-center border border-dotted border-[#555] text-xs leading-3 font-bold text-[#444]">T</span>
            </Tool>
            <Tool label="Arrows" menu>
              <Icon>
                <path d="M2 6l4-4 3 3-4 4z" fill="#444" transform="translate(0 -.5)" />
                <path d="M4 10l2 3M9 8l4-2 1 4" stroke="#555" strokeWidth="1.500" />
                <path d="M8 13l4-3 4 3-4 4z" fill="#444" />
              </Icon>
            </Tool>
          </Band>
          <Band>
            <Grip />
            {timeframes.map((tf) => (
              <button
                key={tf}
                type="button"
                aria-pressed={tf === "H1"}
                className={clsx(
                  "h-6 w-[25px] shrink-0 border text-[11px] text-[#a6a6a6]",
                  tf === "H1" ? "border-t-[#a0a0a0] border-r-white border-b-white border-l-[#a0a0a0] bg-[#f8f8f8]" : "border-transparent",
                )}
              >
                {tf}
              </button>
            ))}
          </Band>
        </div>
      </div>
    </div>
  )
}

function TitleBar() {
  return (
    <header className="flex h-[23px] items-center gap-[5px] bg-white pl-[2px]">
      <svg viewBox="0 0 16 16" className="size-4 shrink-0" aria-hidden="true">
        <rect width="16" height="16" fill="#1f5fae" />
        <path d="M2.500 9V2.500H7M2.500 5.500H6M8.500 2.500l5 6.500M13.500 2.500l-5 6.500" stroke="#fff" strokeWidth="1.600" fill="none" />
        <path d="M2 13h12" stroke="#cfe0f5" strokeWidth="2" strokeDasharray="2 1" />
      </svg>
      <h1 className="flex-1 whitespace-nowrap">95526: FXChoice-Classic Demo - Demo Account - [EURUSD,H1 (visual)]</h1>
      <div className="flex">
        <button type="button" aria-label="Minimize" className="flex w-[46px] justify-center">
          <svg viewBox="0 0 10 10" className="size-[10px]" stroke="#000" fill="none">
            <path d="M0 5.500h10" />
          </svg>
        </button>
        <button type="button" aria-label="Restore" className="flex w-[46px] justify-center">
          <svg viewBox="0 0 10 10" className="size-[10px]" stroke="#000" fill="none">
            <path d="M.5 2.500h7v7h-7zM2.500 2.500v-2h7v7h-2" />
          </svg>
        </button>
        <button type="button" aria-label="Close" className="flex w-[46px] justify-center">
          <svg viewBox="0 0 10 10" className="size-[10px]" stroke="#000" fill="none">
            <path d="M0 0l10 10M10 0L0 10" />
          </svg>
        </button>
      </div>
    </header>
  )
}

function MenuBar() {
  return (
    <div className="flex h-5 items-center bg-[#f0f0f0] pl-1">
      <Icon size="size-4">
        <path d="M1.500 1.500h11v9h-11z" fill="#fff" stroke="#5b9bc9" />
        <path d="M4.500 6.500h12v10h-12z" fill="#eaf5fc" stroke="#5b9bc9" />
        <path d="M6 12l2-3 2 5 2-4 2 3M4 4h6" stroke="#4a86b4" />
      </Icon>
      <nav className="flex flex-1 gap-px">
        {menus.map((m) => (
          <button key={m} type="button" className="px-2">
            {m}
          </button>
        ))}
      </nav>
      <div className="flex gap-[2px]">
        {["M4 11.500h6", "M6 4.500h6v4h-3M4 7.500h5v4H4z", "M4 4l7 7M11 4l-7 7"].map((d, i) => (
          <button
            key={d}
            type="button"
            aria-label={["Minimize chart", "Restore chart", "Close chart"][i]}
            className="flex h-[18px] w-[17px] items-center justify-center border border-[#e3e3e3] bg-white"
          >
            <svg viewBox="0 0 15 15" className="size-[15px]" stroke="#6f7f92" strokeWidth="2" fill="none">
              <path d={d} />
            </svg>
          </button>
        ))}
      </div>
    </div>
  )
}

function PanelTitle({ children }: { children: ReactNode }) {
  return (
    <div className="flex h-[15px] shrink-0 items-center justify-between pr-[3px]">
      <h2 className="bg-[#cfdcea] leading-[14px] whitespace-nowrap">{children}</h2>
      <button type="button" aria-label="Close panel">
        <svg viewBox="0 0 7 7" className="size-[7px]" stroke="#000" strokeWidth="2">
          <path d="M.5.5l6 6M6.500.5l-6 6" />
        </svg>
      </button>
    </div>
  )
}

function ScrollBar({ before, thumb, after }: { before: string; thumb: string; after: string }) {
  return (
    <div className="flex w-[15px] flex-col items-center bg-[#f0f0f0]">
      <svg viewBox="0 0 8 17" className="h-[17px] w-2 shrink-0" stroke="#555" strokeWidth="1.500" fill="none">
        <path d="M.5 11L4 7.500 7.500 11" />
      </svg>
      <span className={before} />
      <span className={clsx("w-full bg-[#cdcdcd]", thumb)} />
      <span className={after} />
      <svg viewBox="0 0 8 17" className="h-[17px] w-2 shrink-0" stroke="#555" strokeWidth="1.500" fill="none">
        <path d="M.5 7.500L4 11l3.500-3.500" />
      </svg>
    </div>
  )
}

function PanelTab({ children }: { children: ReactNode }) {
  return (
    <button
      type="button"
      className="mb-px ml-[3px] h-5 w-[26px] shrink-0 overflow-hidden border-b border-l border-black bg-white pl-[7px] text-left"
    >
      {children}
    </button>
  )
}

function SidePanels() {
  return (
    <aside className="flex w-[34px] shrink-0 flex-col border-t border-[#a0a0a0] pt-[2px]">
      <section className="flex min-h-0 flex-[673_0_0] flex-col border-r border-white pl-[3px]">
        <PanelTitle>Ma</PanelTitle>
        <div className="flex min-h-0 flex-1 border-t border-l border-[#a0a0a0] bg-white">
          <div className="flex w-[10px] flex-col overflow-hidden">
            <div className="flex h-6 shrink-0 gap-[3px] border-b border-[#d0d0d0] pl-[2px]">
              <span className="w-px bg-[#d8d8d8]" />
              <span className="w-px bg-[#d8d8d8]" />
            </div>
            {ticks.map((t, i) => (
              <svg key={i} viewBox="0 0 10 20" className="h-5 w-[10px] shrink-0" aria-hidden="true">
                <path d="M3.500 0v20M0 19.500h10" stroke="#d0d0d0" />
                {t === "G" ? (
                  <path d="M5.500 10L10 6v8H8.500v-3h-3z" fill="#49b849" stroke="#187a18" strokeWidth=".800" />
                ) : (
                  <path d="M5.500 10l4.500 4V6H8.500v3h-3z" fill="#ee7a50" stroke="#a83a18" strokeWidth=".800" />
                )}
              </svg>
            ))}
          </div>
          <ScrollBar before="h-0" thumb="flex-[473]" after="flex-[128]" />
        </div>
        <PanelTab>Syr</PanelTab>
      </section>
      <section className="mt-1 flex min-h-0 flex-[579_0_0] flex-col border-t border-r border-t-[#a0a0a0] border-r-white pt-px pl-[3px]">
        <PanelTitle>Na</PanelTitle>
        <div className="flex min-h-0 flex-1 border-t border-l border-[#a0a0a0] bg-white">
          <div className="w-[10px]" />
          <ScrollBar before="flex-[274]" thumb="flex-[178]" after="flex-[50]" />
        </div>
        <PanelTab>Co</PanelTab>
      </section>
    </aside>
  )
}

function Candles() {
  return (
    <g shapeRendering="crispEdges">
      {candles.map((c) => (
        <g key={c.x} fill={c.up ? "#1ee61e" : "#c41e3a"}>
          <rect x={c.x} y={c.high} width="1" height={Math.max(1, c.low - c.high)} />
          <rect x={c.x - 1} y={c.top} width="3" height={Math.max(1, c.bottom - c.top)} />
        </g>
      ))}
    </g>
  )
}

function Plot() {
  return (
    <svg viewBox="45 102 2476 1211" className="block h-auto w-full" role="img" aria-label="EURUSD,H1 price chart">
      <rect x="45" y="161" width="2476" height="1" fill="#778899" />
      <Candles />
      <g fill="none" strokeDasharray="3 3">
        <path d={sellTrades.join("")} stroke="#dc2020" />
        <path d={buyTrades.join("")} stroke="#1414d0" />
      </g>
      {sellSignals.map(([x, y]) => (
        <path
          key={`${x}-${y}`}
          transform={`translate(${x} ${y})`}
          d="M-1 0h3v7l3-3h1v3L.5 13-5 7V4h1l3 3z"
          fill="#f00000"
          stroke="#f00000"
          strokeWidth=".800"
        />
      ))}
      {buySignals.map(([x, y]) => (
        <path
          key={`${x}-${y}`}
          transform={`translate(${x} ${y})`}
          d="M-1 13h3V6l3 3h1V6L.5 0-5 6v3h1l3-3z"
          fill="#0000f0"
          stroke="#0000f0"
          strokeWidth=".800"
        />
      ))}
      {[...buyEntries.map((p) => ({ p, fill: "#0000e0" })), ...sellEntries.map((p) => ({ p, fill: "#f00000" }))].map(({ p: [x, y], fill }) => (
        <path
          key={`${x}-${y}`}
          transform={`translate(${x} ${y})`}
          d="M-3-2h2.500v-2L4 .5-.5 5V3H-3z"
          fill={fill}
          stroke="#fff"
          strokeWidth="1.200"
        />
      ))}
      {exits.map(([x, y]) => (
        <path key={`${x}-${y}`} transform={`translate(${x} ${y})`} d="M2.500-4v8.500L-2 .5z" fill="#daa545" stroke="#fff3d8" strokeWidth="1" />
      ))}
      <g fill="none" stroke="#e61e1e" strokeLinecap="round" strokeLinejoin="round">
        <g strokeWidth="7">
          <path d="M880 1077Q885 1066 887 1055Q897 1058 903 1067Q908 1073 912 1076" />
          <path d="M888 1058Q896 1085 895 1108Q896 1127 904 1137" />
          <path d="M981 727Q983 705 993 694Q1005 696 1015 703Q1024 707 1033 710" />
          <path d="M992 697Q1010 726 1021 751Q1026 771 1036 784" />
        </g>
        <g strokeWidth="4">
          <path d="M2311 671Q2315 665 2314 622Q2332 630 2382 630" />
          <path d="M2314 622Q2330 638 2346 661Q2356 674 2366 682" />
          <path d="M2395 527Q2394 512 2396 498V475Q2405 475 2414 479Q2445 488 2465 488" />
          <path d="M2397 476Q2403 483 2407 499L2436 536L2442 540" />
        </g>
      </g>
    </svg>
  )
}

function Chart() {
  return (
    <main className="flex min-w-0 flex-1 flex-col">
      <div className="border-t-2 border-l-2 border-t-[#696969] border-l-[#696969] bg-black pt-[2px] pl-[2px] font-['Open_Sans','Noto_Sans',sans-serif] text-[9px] text-white">
        <div className="flex">
          <div className="relative min-w-0 flex-1 border border-white">
            <p className="absolute top-0 left-[3px] whitespace-pre">EURUSD,H1  1.10525 1.10685 1.10517 1.10685</p>
            <Plot />
          </div>
          <div className="relative -mb-[2px] flex w-[42px] flex-col justify-between pt-[10px] leading-3">
            {prices.map((p) => (
              <div key={p} className="flex items-center gap-[2px]">
                <span className="h-px w-[3px] bg-white" />
                <span>{p}</span>
              </div>
            ))}
            <span className="absolute top-[55px] right-0 left-[1px] bg-white pl-1 leading-[11px] text-black">1.10685</span>
          </div>
        </div>
        <div className="flex h-[21px] overflow-hidden">
          {times.map((t) => (
            <div key={t} className="w-16 shrink-0 whitespace-nowrap">
              <span className="block h-1 w-px bg-white" />
              <span className="block leading-3">{t}</span>
            </div>
          ))}
        </div>
      </div>
      <div className="h-[2px] bg-white" />
      <div className="flex h-[18px] items-center border-t border-l-2 border-t-black border-l-[#a0a0a0] pl-1 text-[#808080]">
        <div className="flex flex-1 overflow-hidden">
          {chartTabs.map((tab, i) => (
            <button key={i} type="button" className="h-4 shrink-0 border-r border-[#808080] px-[10px] leading-4 whitespace-nowrap">
              {tab}
            </button>
          ))}
        </div>
        <div className="flex w-9 items-center justify-between px-2">
          <button type="button" aria-label="Previous tabs">
            <svg viewBox="0 0 4 8" className="h-2 w-1">
              <path d="M4 0v8L0 4z" fill="#a0a0a0" />
            </svg>
          </button>
          <button type="button" aria-label="Next tabs">
            <svg viewBox="0 0 4 8" className="h-2 w-1">
              <path d="M0 0v8l4-4z" fill="#000" />
            </svg>
          </button>
        </div>
      </div>
    </main>
  )
}

function StatusBar() {
  const cell = "flex items-center border-l border-[#a0a0a0] pl-[5px] shrink-0"
  return (
    <footer className="flex h-5 items-stretch overflow-hidden border-t border-[#a0a0a0] pt-[2px] whitespace-nowrap">
      <span className="flex flex-1 items-center pl-[2px]">For Help, press F1</span>
      <span className={clsx(cell, "w-[116px]")}>Default</span>
      <span className={clsx(cell, "w-[102px]")}>2017.04.21 14:00</span>
      <span className={clsx(cell, "w-[71px]")}>O: 1.07003</span>
      <span className={clsx(cell, "w-[71px]")}>H: 1.07041</span>
      <span className={clsx(cell, "w-[68px]")}>L: 1.06905</span>
      <span className={clsx(cell, "w-[70px]")}>C: 1.06905</span>
      <span className={clsx(cell, "w-[66px]")}>V: 3872</span>
      <span className={clsx(cell, "w-[128px] gap-1")}>
        <svg viewBox="0 0 23 14" className="h-[14px] w-[23px]" aria-hidden="true">
          <path d="M1.500 0v11M4.500 0v10M7.500 0v9M10.500 0v8M13.500 0v6M16.500 0v5M19.500 0v4M22 0v3" stroke="#5f8a14" strokeWidth="2" />
          <path d="M1.500 12v2M4.500 11v3M7.500 10v4M10.500 9v5M13.500 7v7M16.500 6v8M19.500 5v9M22 4v10" stroke="#0f4f7a" strokeWidth="2" />
        </svg>
        814/4 kb
      </span>
    </footer>
  )
}

export default function App() {
  return (
    <div className="flex min-h-screen font-['Roboto','Open_Sans',sans-serif] text-xs leading-4 text-black">
      <div className="flex w-[6px] shrink-0 flex-col">
        <span className="flex-[337] bg-black" />
        <span className="flex-[1041] bg-[#0063b1]" />
        <span className="flex-[28] bg-[#04101e]" />
      </div>
      <div className="flex min-w-0 flex-1 flex-col bg-[#f0f0f0]">
        <TitleBar />
        <MenuBar />
        <Toolbars />
        <div className="flex">
          <SidePanels />
          <Chart />
        </div>
        <div className="flex h-8 gap-1 border-t border-white py-[4px] pl-1">
          <div className="flex w-2 flex-col items-center gap-[5px] pt-[2px]">
            <svg viewBox="0 0 7 7" className="size-[7px]" stroke="#000" strokeWidth="2">
              <path d="M.5.5l6 6M6.500.5l-6 6" />
            </svg>
            <span className="h-2 w-[5px] bg-[repeating-linear-gradient(#a0a0a0_0_1px,#f0f0f0_1px_2px)]" />
          </div>
          <div className="flex flex-1 items-center gap-[6px] border-t border-l border-[#a0a0a0] bg-white pl-[5px]">
            <span className="size-[7px] rounded-full border border-[#808080] bg-[#b8b8b8]" />
            <h2>Strategy Tester</h2>
          </div>
        </div>
        <StatusBar />
      </div>
    </div>
  )
}
